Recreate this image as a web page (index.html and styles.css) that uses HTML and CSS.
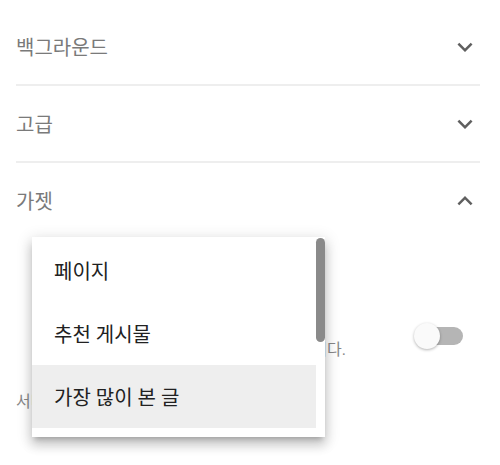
FILE: index.html
```html
<!DOCTYPE html>
<html lang="ko">
<head>
  <meta charset="UTF-8">
  <meta name="viewport" content="width=device-width, initial-scale=1.0">
  <title>레이아웃 설정</title>
  <link rel="stylesheet" href="styles.css">
</head>
<body>

  <div class="panel">

    <div class="section closed">
      <div class="head">
        <span class="title">백그라운드</span>
        <svg class="chevron" viewBox="0 0 24 24"><path d="M16.59 8.59L12 13.17 7.41 8.59 6 10l6 6 6-6z"/></svg>
      </div>
    </div>

    <div class="section closed">
      <div class="head">
        <span class="title">고급</span>
        <svg class="chevron" viewBox="0 0 24 24"><path d="M16.59 8.59L12 13.17 7.41 8.59 6 10l6 6 6-6z"/></svg>
      </div>
    </div>

    <div class="section open">
      <div class="head">
        <span class="title">가젯</span>
        <svg class="chevron" viewBox="0 0 24 24"><path d="M7.41 15.41L12 10.83l4.59 4.58L18 14l-6-6-6 6z"/></svg>
      </div>

      <div class="body">
        <div class="option-row">
          <p class="desc">모바일 화면에서 가젯 표시<br>하단에 선택한 가젯 목록을 모두 표시합니다.</p>
          <div class="toggle"><span class="knob"></span></div>
        </div>
        <p class="note">서비스 설정은 모든 테마에 적용됩니다.</p>

        <!-- dropdown opened over the section -->
        <div class="menu">
          <ul class="menu-list">
            <li>페이지</li>
            <li>추천 게시물</li>
            <li class="active">가장 많이 본 글</li>
          </ul>
          <div class="scroll-thumb"></div>
        </div>
      </div>
    </div>

  </div>

</body>
</html>
```

FILE: styles.css
```css
* {
  box-sizing: border-box;
  margin: 0;
  padding: 0;
}

body {
  font-family: 'Roboto', 'Noto Sans CJK KR', sans-serif;
  background-color: #fff;
  width: 500px;
  height: 465px;
  overflow: hidden;
}

.panel {
  padding: 9px 20px 0 16px;
}

.section.closed {
  border-bottom: 2px solid #eeeeee;
}

.head {
  height: 75px;
  display: flex;
  align-items: center;
  justify-content: space-between;
}

.title {
  font-size: 20px;
  color: #7a7a7a;
}

.chevron {
  width: 30px;
  height: 30px;
  fill: #5f5f5f;
}

.body {
  position: relative;
  padding-top: 79px;
  height: 227px;
}

.option-row {
  display: flex;
  align-items: flex-start;
  justify-content: space-between;
}

.desc {
  padding-left: 41px;
  font-size: 16px;
  line-height: 22px;
  color: #888888;
  white-space: nowrap;
}

.toggle {
  position: relative;
  width: 48px;
  height: 18px;
  margin-top: 10px;
  margin-right: 17px;
  border-radius: 9px;
  background-color: #b5b5b5;
}

.toggle .knob {
  position: absolute;
  left: -1px;
  top: -4px;
  width: 26px;
  height: 26px;
  border-radius: 50%;
  background-color: #fafafa;
  box-shadow: 0 1px 3px rgba(0, 0, 0, 0.3);
}

.note {
  margin-top: 30px;
  font-size: 16px;
  line-height: 22px;
  color: #888888;
}

.menu {
  position: absolute;
  top: -1px;
  left: 16px;
  width: 293px;
  height: 200px;
  background-color: #fff;
  display: flex;
  box-shadow: 0 5px 5px -3px rgba(0, 0, 0, 0.2),
              0 8px 10px 1px rgba(0, 0, 0, 0.14),
              0 3px 14px 2px rgba(0, 0, 0, 0.12);
}

.menu-list {
  list-style: none;
  width: 284px;
  padding-top: 2px;
}

.menu-list li {
  height: 63px;
  display: flex;
  align-items: center;
  padding-left: 22px;
  font-size: 20px;
  color: #212121;
}

.menu-list li.active {
  background-color: #eeeeee;
}

.scroll-thumb {
  width: 9px;
  height: 104px;
  margin-top: 1px;
  border-radius: 5px;
  background-color: #8a8a8a;
}
```
